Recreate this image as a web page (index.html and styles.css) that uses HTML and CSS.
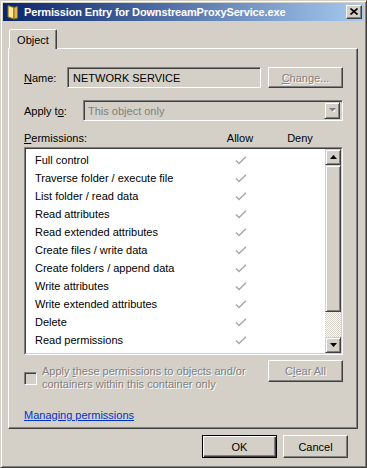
FILE: index.html
```html
<!DOCTYPE html>
<html>
<head>
<meta charset="utf-8">
<title>Permission Entry</title>
<link rel="stylesheet" href="styles.css">
</head>
<body>
<div class="window">
  <div class="titlebar">
    <svg class="app-icon" width="16" height="16" viewBox="0 0 16 16">
      <path d="M3 1.5 L9 3.5 L9 15 L3 13 Z" fill="#f3d36a" stroke="#8a6d1c" stroke-width="1"/>
      <path d="M9 3.5 L12.5 2.5 L12.5 14 L9 15 Z" fill="#e2b84a" stroke="#8a6d1c" stroke-width="1"/>
      <path d="M4 3 L8 4.3 L8 13.5 L4 12.3 Z" fill="#fbe7a0"/>
    </svg>
    <span class="title">Permission Entry for DownstreamProxyService.exe</span>
    <div class="close-btn">
      <svg width="8" height="7" viewBox="0 0 8 7"><path d="M0.5 0.5 L7.5 6.5 M7.5 0.5 L0.5 6.5" stroke="#000" stroke-width="1.6"/></svg>
    </div>
  </div>

  <div class="tabs"><div class="tab">Object</div></div>

  <div class="panel">
    <div class="row name-row">
      <span class="lbl name-lbl"><u>N</u>ame:</span>
      <div class="field name-field">NETWORK SERVICE</div>
      <div class="btn change"><span class="dis"><u>C</u>hange...</span></div>
    </div>

    <div class="row apply-row">
      <span class="lbl apply-lbl">Apply t<u>o</u>:</span>
      <div class="field combo">
        <span class="combo-text">This object only</span>
        <span class="combo-btn">
          <svg width="7" height="5" viewBox="0 0 7 5"><path d="M1 1 H6 L3.5 3.5 Z" fill="#fff" transform="translate(1,1)"/><path d="M0 0 H7 L3.5 3.5 Z" fill="#808080"/></svg>
        </span>
      </div>
    </div>

    <div class="perm-head">
      <span><u>P</u>ermissions:</span>
      <span class="col">Allow</span>
      <span class="col">Deny</span>
    </div>

    <div class="list">
      <div class="list-inner">
        <div class="items">
          <div class="item"><span>Full control</span><span class="col"><svg class="tick" width="12" height="9" viewBox="0 0 12 9"><path d="M1 4.5 L4 7.5 L11 0.8" fill="none" stroke="#a8a8a8" stroke-width="1.5"/></svg></span><span></span></div>
          <div class="item"><span>Traverse folder / execute file</span><span class="col"><svg class="tick" width="12" height="9" viewBox="0 0 12 9"><path d="M1 4.5 L4 7.5 L11 0.8" fill="none" stroke="#a8a8a8" stroke-width="1.5"/></svg></span><span></span></div>
          <div class="item"><span>List folder / read data</span><span class="col"><svg class="tick" width="12" height="9" viewBox="0 0 12 9"><path d="M1 4.5 L4 7.5 L11 0.8" fill="none" stroke="#a8a8a8" stroke-width="1.5"/></svg></span><span></span></div>
          <div class="item"><span>Read attributes</span><span class="col"><svg class="tick" width="12" height="9" viewBox="0 0 12 9"><path d="M1 4.5 L4 7.5 L11 0.8" fill="none" stroke="#a8a8a8" stroke-width="1.5"/></svg></span><span></span></div>
          <div class="item"><span>Read extended attributes</span><span class="col"><svg class="tick" width="12" height="9" viewBox="0 0 12 9"><path d="M1 4.5 L4 7.5 L11 0.8" fill="none" stroke="#a8a8a8" stroke-width="1.5"/></svg></span><span></span></div>
          <div class="item"><span>Create files / write data</span><span class="col"><svg class="tick" width="12" height="9" viewBox="0 0 12 9"><path d="M1 4.5 L4 7.5 L11 0.8" fill="none" stroke="#a8a8a8" stroke-width="1.5"/></svg></span><span></span></div>
          <div class="item"><span>Create folders / append data</span><span class="col"><svg class="tick" width="12" height="9" viewBox="0 0 12 9"><path d="M1 4.5 L4 7.5 L11 0.8" fill="none" stroke="#a8a8a8" stroke-width="1.5"/></svg></span><span></span></div>
          <div class="item"><span>Write attributes</span><span class="col"><svg class="tick" width="12" height="9" viewBox="0 0 12 9"><path d="M1 4.5 L4 7.5 L11 0.8" fill="none" stroke="#a8a8a8" stroke-width="1.5"/></svg></span><span></span></div>
          <div class="item"><span>Write extended attributes</span><span class="col"><svg class="tick" width="12" height="9" viewBox="0 0 12 9"><path d="M1 4.5 L4 7.5 L11 0.8" fill="none" stroke="#a8a8a8" stroke-width="1.5"/></svg></span><span></span></div>
          <div class="item"><span>Delete</span><span class="col"><svg class="tick" width="12" height="9" viewBox="0 0 12 9"><path d="M1 4.5 L4 7.5 L11 0.8" fill="none" stroke="#a8a8a8" stroke-width="1.5"/></svg></span><span></span></div>
          <div class="item"><span>Read permissions</span><span class="col"><svg class="tick" width="12" height="9" viewBox="0 0 12 9"><path d="M1 4.5 L4 7.5 L11 0.8" fill="none" stroke="#a8a8a8" stroke-width="1.5"/></svg></span><span></span></div>
          <div class="item"><span>Change permissions</span><span class="col"><svg class="tick" width="12" height="9" viewBox="0 0 12 9"><path d="M1 4.5 L4 7.5 L11 0.8" fill="none" stroke="#a8a8a8" stroke-width="1.5"/></svg></span><span></span></div>
        </div>
        <div class="scrollbar">
          <div class="sb-btn"><svg width="7" height="4" viewBox="0 0 7 4"><path d="M3.5 0 L7 4 H0 Z" fill="#000"/></svg></div>
          <div class="sb-thumb"></div>
          <div class="sb-track"></div>
          <div class="sb-btn"><svg width="7" height="4" viewBox="0 0 7 4"><path d="M0 0 H7 L3.5 4 Z" fill="#000"/></svg></div>
        </div>
      </div>
    </div>

    <div class="bottom-row">
      <div class="check-wrap">
        <span class="checkbox"></span>
        <span class="check-text dis">Apply <u>t</u>hese permissions to objects and/or<br>containers within this container only</span>
      </div>
      <div class="btn clear"><span class="dis">C<u>l</u>ear All</span></div>
    </div>

    <div class="link-row"><a class="link">Managing permissions</a></div>
  </div>

  <div class="dlg-buttons">
    <div class="btn default ok">OK</div>
    <div class="btn cancel">Cancel</div>
  </div>
</div>
</body>
</html>
```

FILE: styles.css
```css
html, body {
  margin: 0;
  padding: 0;
  background: #d4d0c8;
}

body {
  font-family: "Liberation Sans", Arial, sans-serif;
  font-size: 11px;
  color: #000;
}

.window {
  width: 367px;
  height: 468px;
  box-sizing: border-box;
  border: 1px solid;
  border-color: #d4d0c8 #404040 #404040 #d4d0c8;
  box-shadow: inset 1px 1px #fff, inset -1px -1px #808080;
  padding: 2px;
  background: #d4d0c8;
  display: flex;
  flex-direction: column;
}

/* Title bar */
.titlebar {
  height: 18px;
  display: flex;
  align-items: center;
  background: linear-gradient(to right, #0a246a, #a6caf0);
  color: #fff;
}

.app-icon {
  margin-left: 2px;
  flex: none;
}

.title {
  margin-left: 3px;
  font-weight: bold;
  font-size: 11px;
  letter-spacing: -0.15px;
  white-space: nowrap;
  flex: 1;
}

.close-btn {
  width: 16px;
  height: 14px;
  box-sizing: border-box;
  margin-right: 2px;
  background: #d4d0c8;
  border: 1px solid;
  border-color: #fff #404040 #404040 #fff;
  box-shadow: inset -1px -1px #808080;
  display: flex;
  align-items: center;
  justify-content: center;
  padding: 0 1px 1px 0;
}

/* Tabs */
.tabs {
  margin-top: 8px;
  padding-left: 6px;
  display: flex;
  position: relative;
  z-index: 1;
}

.tab {
  width: 48px;
  height: 20px;
  box-sizing: border-box;
  background: #d4d0c8;
  border: 1px solid;
  border-bottom: none;
  border-color: #fff #404040 transparent #fff;
  border-radius: 2px 2px 0 0;
  box-shadow: inset -1px 0 #808080;
  display: flex;
  align-items: center;
  justify-content: center;
  margin-bottom: -1px;
}

/* Panel */
.panel {
  margin-left: 5px;
  width: 350px;
  height: 381px;
  box-sizing: border-box;
  border: 1px solid;
  border-color: #fff #404040 #404040 #fff;
  box-shadow: inset -1px -1px #808080;
  padding: 18px 14px 0 15px;
  display: flex;
  flex-direction: column;
}

.row {
  display: flex;
  align-items: center;
  height: 21px;
}

.apply-row {
  margin-top: 12px;
}

.lbl {
  flex: none;
}

.name-lbl {
  width: 43px;
}

.apply-lbl {
  width: 59px;
}

.field {
  box-sizing: border-box;
  height: 21px;
  border: 1px solid;
  border-color: #808080 #fff #fff #808080;
  box-shadow: inset 1px 1px #404040, inset -1px -1px #d4d0c8;
  background: #d4d0c8;
  display: flex;
  align-items: center;
}

.name-field {
  width: 194px;
  padding-left: 5px;
}

.combo {
  width: 260px;
  padding: 2px;
}

.combo-text {
  flex: 1;
  color: #808080;
  padding-left: 2px;
}

.combo-btn {
  width: 16px;
  height: 17px;
  box-sizing: border-box;
  border: 1px solid;
  border-color: #d4d0c8 #404040 #404040 #d4d0c8;
  box-shadow: inset 1px 1px #fff, inset -1px -1px #808080;
  display: flex;
  align-items: center;
  justify-content: center;
}

.btn {
  box-sizing: border-box;
  background: #d4d0c8;
  border: 1px solid;
  border-color: #fff #404040 #404040 #fff;
  box-shadow: inset -1px -1px #808080;
  display: flex;
  align-items: center;
  justify-content: center;
}

.btn.default {
  border-color: #000;
  box-shadow: inset 1px 1px #fff, inset -1px -1px #404040, inset -2px -2px #808080;
}

.dis {
  color: #808080;
  text-shadow: 1px 1px #fff;
}

.change {
  margin-left: 7px;
  width: 75px;
  height: 21px;
}

/* Permissions header */
.perm-head {
  margin-top: 9px;
  height: 16px;
  display: grid;
  grid-template-columns: 186px 60px 60px;
  align-items: center;
}

.col {
  text-align: center;
  display: flex;
  justify-content: center;
}

/* List */
.list {
  margin-top: 1px;
  height: 208px;
  box-sizing: border-box;
  border: 1px solid;
  border-color: #808080 #fff #fff #808080;
}

.list-inner {
  height: 100%;
  box-sizing: border-box;
  border: 1px solid;
  border-color: #404040 #d4d0c8 #d4d0c8 #404040;
  background: #fff;
  display: flex;
}

.items {
  flex: 1;
  padding-top: 2px;
  overflow: hidden;
}

.item {
  height: 18px;
  padding-left: 9px;
  display: grid;
  grid-template-columns: 176px 60px 1fr;
  align-items: center;
  white-space: nowrap;
}

.tick {
  display: block;
}

.scrollbar {
  width: 16px;
  display: flex;
  flex-direction: column;
}

.sb-btn {
  height: 16px;
  box-sizing: border-box;
  background: #d4d0c8;
  border: 1px solid;
  border-color: #d4d0c8 #404040 #404040 #d4d0c8;
  box-shadow: inset 1px 1px #fff, inset -1px -1px #808080;
  display: flex;
  align-items: center;
  justify-content: center;
}

.sb-thumb {
  height: 147px;
  box-sizing: border-box;
  background: #d4d0c8;
  border: 1px solid;
  border-color: #d4d0c8 #404040 #404040 #d4d0c8;
  box-shadow: inset 1px 1px #fff, inset -1px -1px #808080;
}

.sb-track {
  flex: 1;
  background: repeating-conic-gradient(#d4d0c8 0 25%, #fff 0 50%) 0 0 / 2px 2px;
}

/* Bottom row */
.bottom-row {
  margin-top: 5px;
  display: flex;
  justify-content: space-between;
  align-items: flex-start;
}

.check-wrap {
  display: flex;
  align-items: center;
  margin-top: 5px;
}

.checkbox {
  width: 13px;
  height: 13px;
  box-sizing: border-box;
  border: 1px solid;
  border-color: #808080 #fff #fff #808080;
  box-shadow: inset 1px 1px #404040, inset -1px -1px #d4d0c8;
  background: #d4d0c8;
  flex: none;
}

.check-text {
  margin-left: 5px;
  line-height: 13px;
}

.clear {
  width: 75px;
  height: 22px;
}

.link-row {
  margin-top: 18px;
}

.link {
  color: #0033cc;
  text-decoration: underline;
}

/* Dialog buttons */
.dlg-buttons {
  margin-top: 6px;
  display: flex;
  padding-left: 199px;
  gap: 6px;
}

.ok {
  width: 75px;
  height: 23px;
}

.cancel {
  width: 65px;
  height: 23px;
}
```
